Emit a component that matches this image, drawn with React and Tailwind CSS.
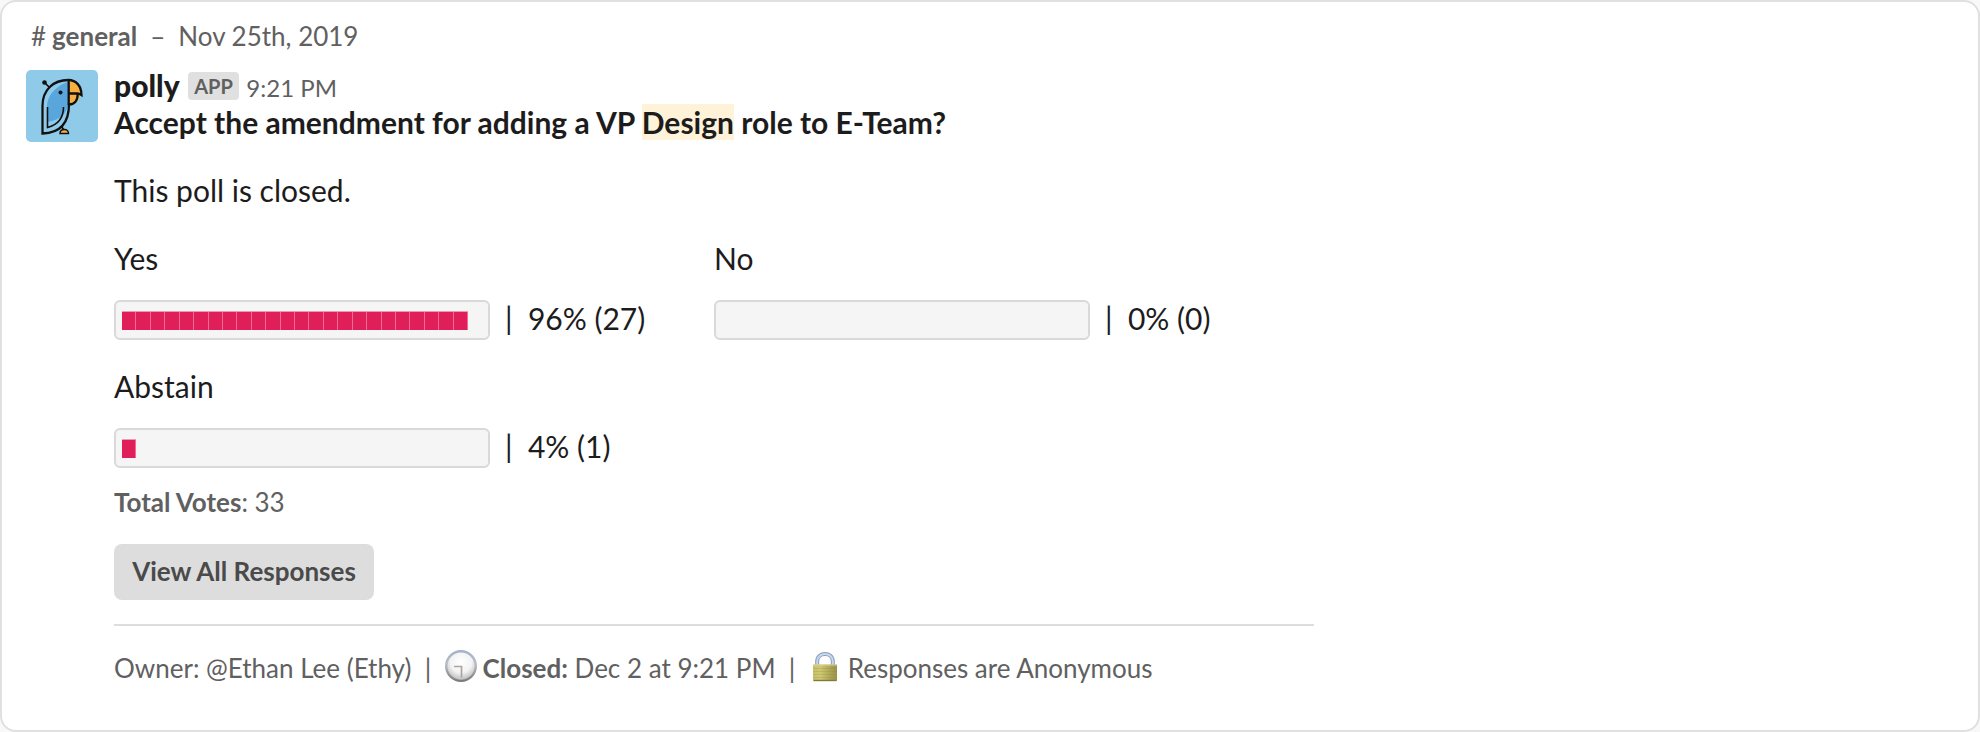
function Parrot() {
  return (
    <svg viewBox="0 0 72 72" className="mt-[1px] h-[72px] w-[72px] shrink-0 rounded-[5px] bg-[#8fcbe8]">
      <path d="M17 63.5V36C17 20 27 10 43 10V33C43 49 37 62 17 63.5Z" fill="#8fcbe8" />
      <path d="M21 52V35C22 24 31 15.500 42 12V33C42 42 35 50 21 52Z" fill="#58a6dc" />
      <path d="M43 10C50 10 55.500 16 55.500 24.500L54 24C54 31 49 34.500 43 34.500Z" fill="#f5b041" />
      <g fill="none" stroke="#111" strokeWidth="2.300">
        <path d="M43 34C43 52 35 63 16.500 63.500V36C16.500 20 27 10 42.500 10C50 10 55.500 16 55.500 25C54 24 53 23.500 51.500 23.500H43" />
        <path d="M42.700 10V35M43 34.500C48 34.500 51.700 31 51.700 24" />
        <path d="M21.500 37V57.500C31 55 37.500 49 37.500 37" strokeWidth="1.600" />
        <path d="M18.500 12.500L24 18M35 56L38 60" strokeWidth="1.700" />
      </g>
      <circle cx="18.500" cy="12.500" r="2.300" fill="#111" />
      <circle cx="34.500" cy="22.500" r="2" fill="#111" />
      <path d="M34 63.500C34 61 36 59.500 38.500 59.500S42.500 61.500 42.500 63.500Z" fill="#f5b041" stroke="#111" strokeWidth="1.500" />
    </svg>
  );
}

function Clock() {
  return (
    <svg viewBox="0 0 32 32" className="mb-[6px] h-8 w-8 shrink-0">
      <defs>
        <linearGradient id="rim" x1="0" y1="0" x2="0" y2="1">
          <stop offset="0" stopColor="#9fb2ca" />
          <stop offset=".45" stopColor="#b9bdc4" />
          <stop offset="1" stopColor="#777" />
        </linearGradient>
        <radialGradient id="face" cx=".5" cy=".35" r=".65">
          <stop offset="0" stopColor="#fff" />
          <stop offset=".6" stopColor="#f3f3f3" />
          <stop offset="1" stopColor="#bdbdbd" />
        </radialGradient>
      </defs>
      <circle cx="16" cy="16" r="16" fill="url(#rim)" />
      <circle cx="16" cy="16.200" r="13.600" fill="url(#face)" />
      <path d="M9 16.500H16.500V27.500" fill="none" stroke="#aaa6a3" strokeWidth="1.700" />
    </svg>
  );
}

function Lock() {
  return (
    <svg viewBox="0 0 24 30" className="h-[30px] w-6 shrink-0">
      <defs>
        <linearGradient id="brass" x1="0" y1="0" x2="1" y2="0">
          <stop offset="0" stopColor="#c9c069" />
          <stop offset=".3" stopColor="#d0c873" />
          <stop offset=".75" stopColor="#aaa353" />
          <stop offset="1" stopColor="#99924a" />
        </linearGradient>
      </defs>
      <path d="M4.200 14V9.500C4.200 -.5 19.800 -.5 19.800 9.500V14" fill="none" stroke="#8d9bae" strokeWidth="4" />
      <path d="M4.200 14V9.500C4.200 -.5 19.800 -.5 19.800 9.500V14" fill="none" stroke="#c3d8f2" strokeWidth="2" />
      <rect x="0" y="12.500" width="24" height="16.500" rx="1" fill="url(#brass)" />
      <path d="M.5 13H23.500" stroke="#ddd79a" />
      <path d="M.5 16.500H23.500M.5 19.500H23.500M.5 22.500H23.500M.5 25.500H23.500" stroke="#8d873f" strokeOpacity=".25" />
      <path d="M.5 28.500H23.500" stroke="#827b36" strokeWidth="1.400" />
    </svg>
  );
}

function Option({ label, cells, result }) {
  return (
    <div className="w-[600px]">
      <div>{label}</div>
      <div className="mt-4 flex h-11">
        <div className="mt-1 flex h-10 w-[376px] items-start rounded-md border-2 border-[#d9d9d9] bg-[#f5f5f5] pl-[6px] pt-[9px]">
          {Array.from({ length: cells }, (_, i) => (
            <div key={i} className="h-[19px] w-[14.43px] border-t border-t-[#ee9ab3] bg-linear-to-r from-[#e01e5a] from-95% to-[#f06c93] to-95%" />
          ))}
        </div>
        <span className="ml-[15px] whitespace-pre">|&nbsp; {result}</span>
      </div>
    </div>
  );
}

export default function App() {
  return (
    <div className="h-[732px] w-[1980px] bg-[#f8f8f8] font-['Lato',sans-serif] text-[#1d1c1d]">
      <div className="h-full rounded-2xl border-2 border-[#e0e0e0] bg-white pl-6 pt-[15px]">
        <div className="flex h-[39px] items-center pl-[5px] text-[26px] text-[#616061]">
          <span>#</span>
          <b className="ml-[6px]">general</b>
          <span className="ml-[13px]">–</span>
          <span className="ml-[13px]">Nov 25th, 2019</span>
        </div>
        <div className="mt-[13px] flex">
          <Parrot />
          <div className="ml-4 text-[30px] leading-[44px]">
            <div className="-mt-[6px] flex h-[37px] items-baseline">
              <b className="font-black">polly</b>
              <span className="ml-2 h-7 rounded bg-[#e0e0e0] px-[6.500px] text-[20px] font-bold leading-[29px] text-[#616061] -translate-y-[3px]">APP</span>
              <span className="ml-[7px] text-[24px] text-[#616061]">9:21 PM</span>
            </div>
            <div className="font-bold">
              Accept the amendment for adding a VP <span className="bg-[#fef3d9]">Design</span> role to E-Team?
            </div>
            <div className="mt-6">This poll is closed.</div>
            <div className="mt-6 flex w-[1200px] flex-wrap gap-y-6">
              <Option label="Yes" cells={24} result="96% (27)" />
              <Option label="No" cells={0} result="0% (0)" />
              <Option label="Abstain" cells={1} result="4% (1)" />
            </div>
            <div className="mt-[15px] h-[39px] text-[26px] leading-[39px] text-[#616061]"><b>Total Votes</b>: 33</div>
            <button className="mt-[22px] flex h-14 w-[260px] items-center justify-center rounded-lg bg-[#dddddd] pb-[2px] text-[26px] font-bold text-[#4a4a4b]">View All Responses</button>
            <div className="mt-6 w-[1200px] border-t-2 border-[#dddddd]" />
            <div className="mt-[23px] flex h-[39px] items-center whitespace-pre text-[26px] leading-[39px] text-[#616061]">
              <span>Owner: @Ethan Lee (Ethy)&nbsp; |&nbsp; </span>
              <Clock />
              <span className="ml-[6px]"><b>Closed:</b> Dec 2 at 9:21 PM&nbsp; |&nbsp; </span>
              <span className="ml-1 flex pb-[3px]"><Lock /></span>
              <span className="ml-[11px]">Responses are Anonymous</span>
            </div>
          </div>
        </div>
      </div>
    </div>
  );
}
